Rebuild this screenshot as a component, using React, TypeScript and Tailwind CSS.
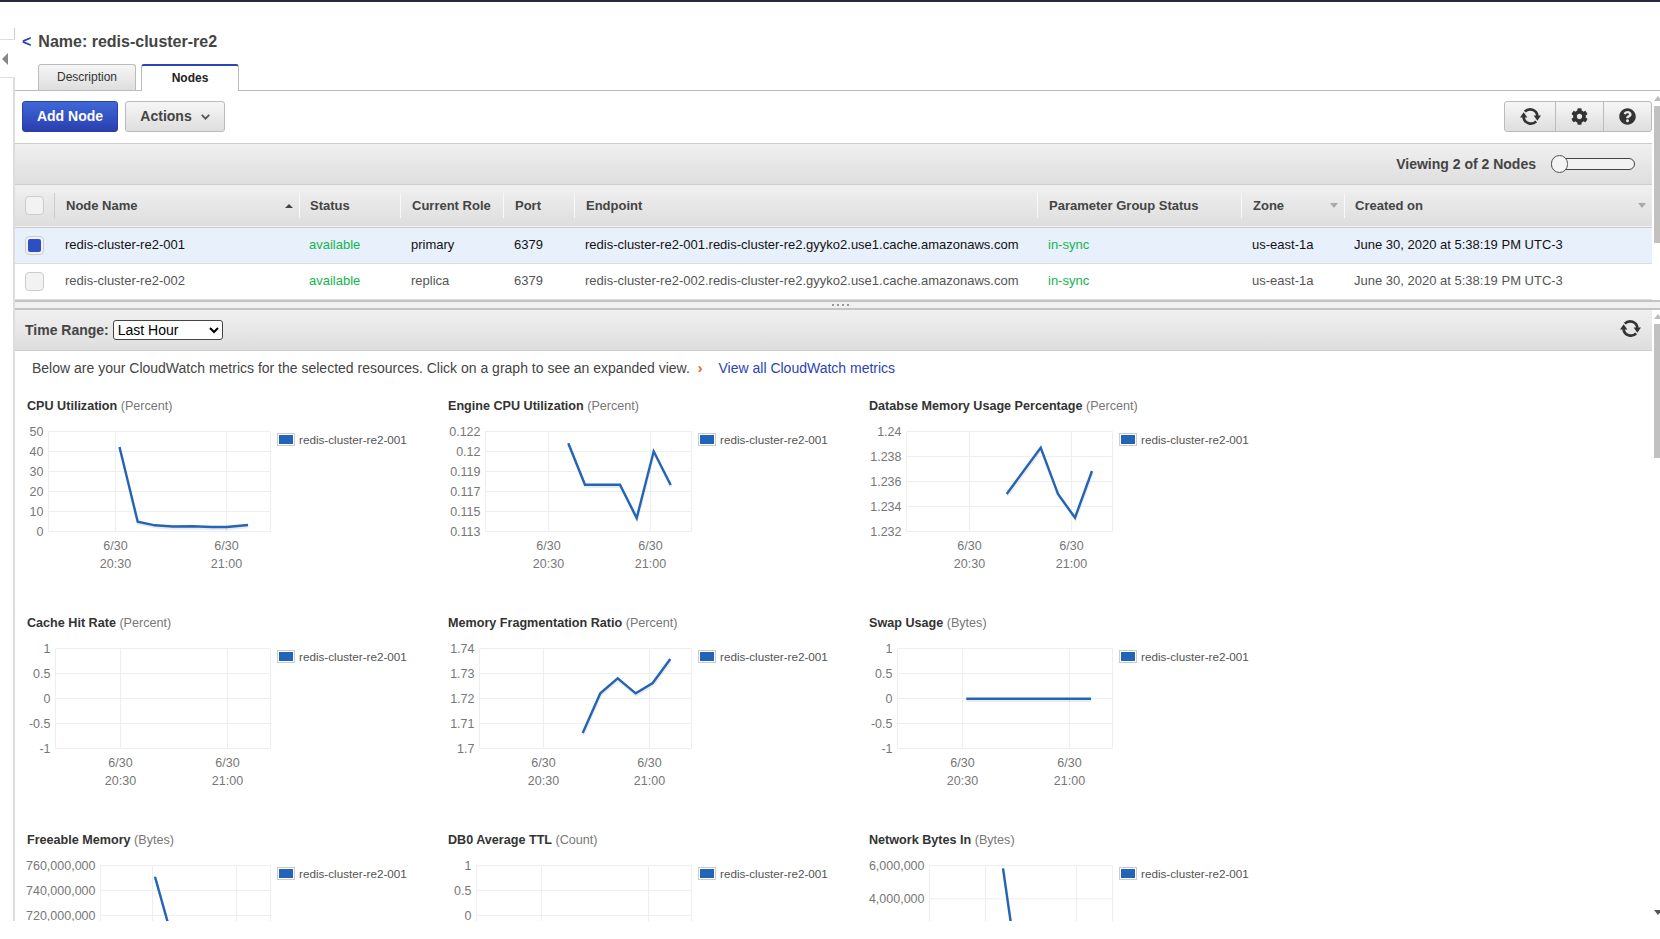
import { FaCog, FaQuestionCircle } from "react-icons/fa";

type Metric = {
  title: string;
  unit: string;
  left: number;
  right: number;
  ticks: string[];
  grid: [number, number];
  line?: [number, number][];
};

// plot coordinates are page pixels of the first chart row; the other rows reuse them
const columnX = [27, 448, 869];

const metrics: Metric[] = [
  {
    title: "CPU Utilization",
    unit: "(Percent)",
    left: 48.5,
    right: 270.5,
    ticks: ["50", "40", "30", "20", "10", "0"],
    grid: [115.5, 226.5],
    line: [[119.5, 447], [137.7, 521.7], [155, 525.3], [173, 526.5], [193, 526.3], [211.7, 527], [226.7, 527], [248, 525]],
  },
  {
    title: "Engine CPU Utilization",
    unit: "(Percent)",
    left: 485.5,
    right: 691.5,
    ticks: ["0.122", "0.12", "0.119", "0.117", "0.115", "0.113"],
    grid: [548.5, 650.5],
    line: [[568.3, 443.3], [585, 484.7], [620, 484.7], [636.7, 518], [653.7, 451.3], [670.7, 485]],
  },
  {
    title: "Databse Memory Usage Percentage",
    unit: "(Percent)",
    left: 906.5,
    right: 1112.5,
    ticks: ["1.24", "1.238", "1.236", "1.234", "1.232"],
    grid: [969.5, 1071.5],
    line: [[1006.7, 494], [1040.7, 447.7], [1058, 494], [1075, 517.7], [1092, 471]],
  },
  {
    title: "Cache Hit Rate",
    unit: "(Percent)",
    left: 55.5,
    right: 270.5,
    ticks: ["1", "0.5", "0", "-0.5", "-1"],
    grid: [120.5, 227.5],
  },
  {
    title: "Memory Fragmentation Ratio",
    unit: "(Percent)",
    left: 479.5,
    right: 691.5,
    ticks: ["1.74", "1.73", "1.72", "1.71", "1.7"],
    grid: [543.5, 649.5],
    line: [[582.7, 516], [600.3, 476.3], [617.7, 461.3], [635.7, 476.3], [652.7, 466], [670.3, 442]],
  },
  {
    title: "Swap Usage",
    unit: "(Bytes)",
    left: 897.5,
    right: 1112.5,
    ticks: ["1", "0.5", "0", "-0.5", "-1"],
    grid: [962.5, 1069.5],
    line: [[966.3, 481.7], [1091, 481.7]],
  },
  {
    title: "Freeable Memory",
    unit: "(Bytes)",
    left: 100.5,
    right: 270.5,
    ticks: ["760,000,000", "740,000,000", "720,000,000", "700,000,000", "680,000,000"],
    grid: [152.5, 236.5],
    line: [[155, 442.7], [178, 525]],
  },
  {
    title: "DB0 Average TTL",
    unit: "(Count)",
    left: 476.5,
    right: 691.5,
    ticks: ["1", "0.5", "0", "-0.5", "-1"],
    grid: [541.5, 648.5],
  },
  {
    title: "Network Bytes In",
    unit: "(Bytes)",
    left: 929.5,
    right: 1112.5,
    ticks: ["6,000,000", "4,000,000", "2,000,000", "0"],
    grid: [985.5, 1076.5],
    line: [[1003, 434.3], [1016, 525]],
  },
];

function RefreshIcon({ className }: { className?: string }) {
  return (
    <svg viewBox="0 0 20 20" className={className}>
      <path d="M4.6 5.4A7 7 0 0 1 16.6 9.5" fill="none" stroke="currentColor" strokeWidth="2.6" />
      <path d="M15.4 14.6A7 7 0 0 1 3.4 10.5" fill="none" stroke="currentColor" strokeWidth="2.6" />
      <path d="M13 9H20L16.5 14Z" fill="currentColor" />
      <path d="M0 11H7L3.5 6Z" fill="currentColor" />
    </svg>
  );
}

function MetricChart({ metric, colX }: { metric: Metric; colX: number }) {
  const top = 431.5;
  const bottom = 531.5;
  const step = (bottom - top) / (metric.ticks.length - 1);
  const points = metric.line?.map((p) => p.join(",")).join(" ");

  return (
    <div className="h-[217px]">
      <div className="h-[26px] text-[12.6px] leading-[26px] text-[#777]">
        <span className="font-bold text-[#333]">{metric.title}</span> {metric.unit}
      </div>
      <svg width="421" height="191" viewBox={`${colX} 419 421 191`} className="block overflow-visible">
        {metric.ticks.map((t, i) => (
          <g key={t + i}>
            <line x1={metric.left} x2={metric.right} y1={top + i * step} y2={top + i * step} stroke="#eeeeee" />
            <text x={metric.left - 5} y={top + i * step + 4} textAnchor="end" fontSize="12.5" fill="#777">
              {t}
            </text>
          </g>
        ))}
        {[metric.left, ...metric.grid, metric.right].map((x) => (
          <line key={x} x1={x} x2={x} y1={top} y2={bottom} stroke="#eeeeee" />
        ))}
        {metric.grid.map((x, i) => (
          <g key={x} fontSize="12.5" fill="#777" textAnchor="middle">
            <text x={x} y={550}>6/30</text>
            <text x={x} y={568}>{i === 0 ? "20:30" : "21:00"}</text>
          </g>
        ))}
        {points && (
          <>
            <polyline points={points} fill="none" stroke="#000" strokeOpacity="0.08" strokeWidth="2.5" transform="translate(0.5 2)" />
            <polyline points={points} fill="none" stroke="#2264b8" strokeWidth="2.4" />
          </>
        )}
        <rect x={colX + 250.5} y={433.5} width="17" height="12" fill="#fff" stroke="#ccc" />
        <rect x={colX + 252} y={435} width="14" height="9" fill="#2264b8" />
        <text x={colX + 272} y={443.5} fontSize="11.7" fill="#545454">redis-cluster-re2-001</text>
      </svg>
    </div>
  );
}

function Scrollbar({ thumbTop, thumbHeight, bottomArrow }: { thumbTop: number; thumbHeight: number; bottomArrow?: boolean }) {
  return (
    <div className="relative w-[8px] shrink-0 bg-white">
      <div className="absolute left-[2px] h-0 w-0 border-x-[4px] border-b-[5px] border-x-transparent border-b-[#bbb]" style={{ top: thumbTop - 10 }} />
      <div className="absolute left-[2px] w-[6px] bg-[#c1c1c1]" style={{ top: thumbTop, height: thumbHeight }} />
      {bottomArrow && (
        <div className="absolute bottom-[6px] left-[2px] h-0 w-0 border-x-[4px] border-t-[5px] border-x-transparent border-t-[#555]" />
      )}
    </div>
  );
}

function SortArrow({ up }: { up?: boolean }) {
  return up ? (
    <span className="h-0 w-0 border-x-[4px] border-b-[4px] border-x-transparent border-b-[#444]" />
  ) : (
    <span className="h-0 w-0 border-x-[4px] border-t-[5px] border-x-transparent border-t-[#aaa]" />
  );
}

function Checkbox({ checked }: { checked?: boolean }) {
  return (
    <span className="flex h-[19px] w-[19px] items-center justify-center rounded-[4px] border border-[#ccc] bg-[#f2f2f2]">
      {checked && <span className="h-[13px] w-[13px] rounded-[2px] bg-[#2c4fc4]" />}
    </span>
  );
}

const headers = [
  { label: "Node Name", sort: "up", w: "w-[245px]", pl: "pl-[11px]" },
  { label: "Status", w: "w-[101px]", pl: "pl-[10px]" },
  { label: "Current Role", w: "w-[103px]", pl: "pl-[11px]" },
  { label: "Port", w: "w-[71px]", pl: "pl-[11px]" },
  { label: "Endpoint", w: "w-[463px]", pl: "pl-[11px]" },
  { label: "Parameter Group Status", w: "w-[204px]", pl: "pl-[11px]" },
  { label: "Zone", sort: "down", w: "w-[103px]", pl: "pl-[11px]" },
  { label: "Created on", sort: "down", w: "w-[308px]", pl: "pl-[10px]" },
];

const rows = [
  { name: "redis-cluster-re2-001", role: "primary", selected: true },
  { name: "redis-cluster-re2-002", role: "replica", selected: false },
];

export default function App() {
  return (
    <div className="flex h-[939px] w-[1660px] flex-col overflow-hidden bg-white font-['Liberation_Sans',Arial,sans-serif] text-[#444]">
      <div className="h-[2px] shrink-0 bg-[#232f3e]" />
      <div className="flex h-[919px] shrink-0">
        {/* collapsed left rail */}
        <div className="flex w-[15px] shrink-0 flex-col pt-[26px]">
          <div className="h-[11px] border-r border-[#ccc]" />
          <div className="flex h-[39px] items-center border-y border-[#ddd] pl-[2px]">
            <span className="h-0 w-0 border-y-[6px] border-r-[6px] border-y-transparent border-r-[#888]" />
          </div>
          <div className="flex-1 border-r-2 border-[#ddd]" />
        </div>

        <div className="flex min-w-0 flex-1 flex-col">
          {/* title and tabs */}
          <div className="h-[89px] shrink-0 border-b border-[#bbb]">
            <div className="flex h-[62px] items-center gap-[7px] pt-[18px] pl-[7px] text-base font-bold">
              <span className="text-[#2a44b8]">&lt;</span>
              <span>Name: redis-cluster-re2</span>
            </div>
            <div className="flex h-[27px] gap-[5px] pl-[23px]">
              <div className="flex h-[26px] w-[98px] items-center justify-center rounded-t-[3px] border border-b-0 border-[#bbb] bg-gradient-to-b from-[#f6f6f6] to-[#dedede] pb-[2px] text-xs text-[#333]">
                Description
              </div>
              <div className="flex h-[27px] w-[98px] items-center justify-center rounded-t-[3px] border border-b-0 border-[#bbb] border-t-[2px] border-t-[#2a44b8] bg-white pb-[2px] text-xs font-bold text-[#222]">
                Nodes
              </div>
            </div>
          </div>

          {/* nodes pane */}
          <div className="flex h-[209px] shrink-0">
            <div className="min-w-0 flex-1">
              <div className="flex h-[52px] items-start justify-between pl-[7px] pt-[10px]">
                <div className="flex gap-[7px] text-sm font-bold">
                  <button className="h-[31px] w-[96px] rounded-[3px] border border-[#2a3fa8] bg-gradient-to-b from-[#4068d8] to-[#2a3fae] pb-[2px] text-white">
                    Add Node
                  </button>
                  <button className="flex h-[31px] w-[100px] items-center justify-center gap-[9px] rounded-[3px] border border-[#bbb] bg-gradient-to-b from-[#f6f6f6] to-[#dedede] pb-[2px] text-[#444]">
                    Actions
                    <svg width="9" height="6" viewBox="0 0 9 6" className="mt-[2px]">
                      <path d="M0.8 0.8 4.5 4.6 8.2 0.8" fill="none" stroke="#555" strokeWidth="1.8" />
                    </svg>
                  </button>
                </div>
                <div className="flex h-[31px] rounded-[3px] border border-[#bbb] bg-gradient-to-b from-[#f6f6f6] to-[#dedede] text-[#333]">
                  <span className="flex w-[51px] items-center justify-center border-r border-[#bbb]">
                    <RefreshIcon className="h-[21px] w-[21px]" />
                  </span>
                  <span className="flex w-[48px] items-center justify-center border-r border-[#bbb]">
                    <FaCog className="h-[17px] w-[17px]" />
                  </span>
                  <span className="flex w-[47px] items-center justify-center">
                    <FaQuestionCircle className="h-[17px] w-[17px]" />
                  </span>
                </div>
              </div>

              <div className="flex h-[42px] items-center justify-end gap-[15px] border-y border-[#ccc] bg-gradient-to-b from-[#f0f0f0] to-[#dedede] pr-[17px] text-sm font-bold">
                <span>Viewing 2 of 2 Nodes</span>
                <span className="relative block h-[12px] w-[84px] rounded-full border border-[#444] bg-[#f2f2f2]">
                  <span className="absolute left-[-1px] top-[-4px] h-[18px] w-[17px] rounded-full border border-[#555] bg-[#f4f4f4]" />
                </span>
              </div>

              <table className="w-full table-fixed border-collapse text-[13px]">
                <thead>
                  <tr className="h-[42px] border-b border-[#ccc] bg-gradient-to-b from-[#f0f0f0] to-[#dedede]">
                    <th className="w-[39px] pl-[10px] align-middle">
                      <Checkbox />
                    </th>
                    {headers.map((h, i) => (
                      <th key={h.label} className={`${h.w} p-0 text-left`}>
                        <div
                          className={`flex h-[25px] items-center justify-between pr-[6px] font-bold ${h.pl} ${
                            i === 0 ? "border-l border-[#ccc]" : "border-l border-[#f8f8f8]"
                          }`}
                        >
                          <span>{h.label}</span>
                          {h.sort && <SortArrow up={h.sort === "up"} />}
                        </div>
                      </th>
                    ))}
                  </tr>
                </thead>
                <tbody>
                  {rows.map((r) => (
                    <tr key={r.name} className={`h-[36px] border-b border-[#ddd] ${r.selected ? "bg-[#e8f0fc] text-[#111]" : "text-[#555]"}`}>
                      <td className="pl-[10px]">
                        <Checkbox checked={r.selected} />
                      </td>
                      <td className="pl-[11px]">{r.name}</td>
                      <td className="pl-[10px] text-[#12b54f]">available</td>
                      <td className="pl-[11px]">{r.role}</td>
                      <td className="pl-[11px]">6379</td>
                      <td className="pl-[11px]">{r.name}.redis-cluster-re2.gyyko2.use1.cache.amazonaws.com</td>
                      <td className="pl-[11px] text-[#12b54f]">in-sync</td>
                      <td className="pl-[11px]">us-east-1a</td>
                      <td className="pl-[10px]">June 30, 2020 at 5:38:19 PM UTC-3</td>
                    </tr>
                  ))}
                </tbody>
              </table>
            </div>
            <Scrollbar thumbTop={15} thumbHeight={137} />
          </div>

          {/* splitter */}
          <div className="flex h-[10px] shrink-0 items-center justify-center gap-[3px] border-y-2 border-[#c4c4c4] bg-[#f0f0f0] pl-[6px]">
            <span className="h-[2px] w-[2px] bg-[#999]" />
            <span className="h-[2px] w-[2px] bg-[#999]" />
            <span className="h-[2px] w-[2px] bg-[#999]" />
            <span className="h-[2px] w-[2px] bg-[#999]" />
          </div>

          {/* metrics pane */}
          <div className="flex min-h-0 flex-1">
            <div className="min-w-0 flex-1 overflow-hidden">
              <div className="flex h-[41px] items-center justify-between border-b border-[#ccc] bg-gradient-to-b from-[#f0f0f0] to-[#dedede] pl-[10px] pr-[11px] text-sm">
                <div className="flex items-center gap-[4px]">
                  <span className="font-bold">Time Range:</span>
                  <select className="h-[20px] w-[110px] rounded-[3px] border border-[#444] bg-white text-sm text-black">
                    <option>Last Hour</option>
                  </select>
                </div>
                <RefreshIcon className="mb-[4px] h-[21px] w-[21px] text-[#333]" />
              </div>
              <p className="h-[42px] pl-[17px] text-sm leading-[34px] text-[#444]">
                Below are your CloudWatch metrics for the selected resources. Click on a graph to see an expanded view.
                <span className="ml-[8px] mr-[16px] font-bold text-[#d9681d]">›</span>
                <a className="text-[#2a44b8]">View all CloudWatch metrics</a>
              </p>
              <div className="grid grid-cols-[421px_421px_421px] pl-[12px]">
                {metrics.map((m, i) => (
                  <MetricChart key={m.title} metric={m} colX={columnX[i % 3]} />
                ))}
              </div>
            </div>
            <Scrollbar thumbTop={14} thumbHeight={134} bottomArrow />
          </div>
        </div>
      </div>
    </div>
  );
}
